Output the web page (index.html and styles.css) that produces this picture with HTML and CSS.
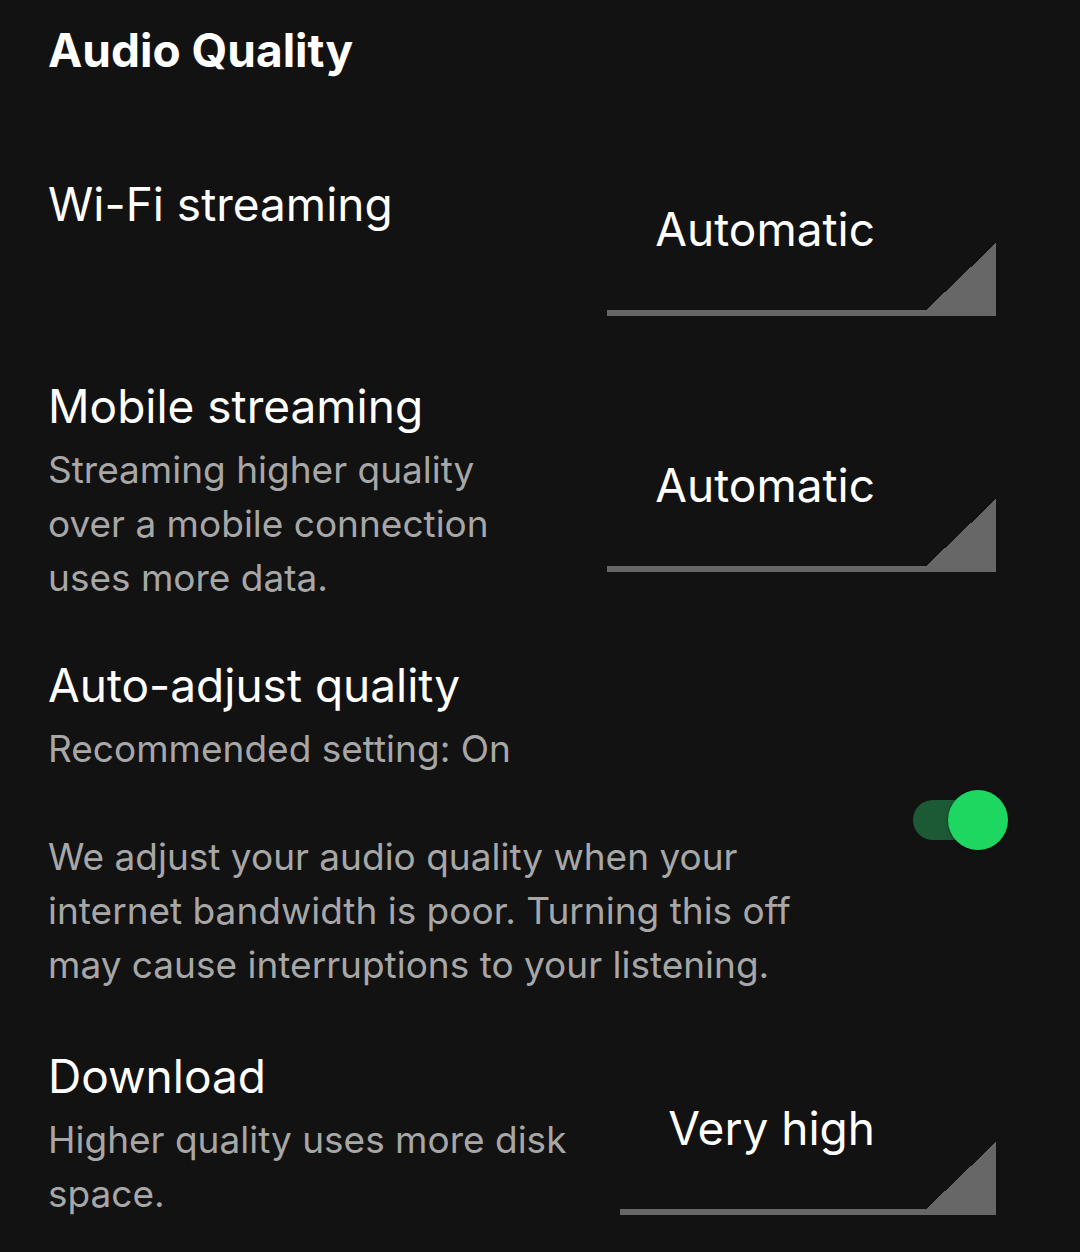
FILE: index.html
```
<!DOCTYPE html>
<html lang="en">
<head>
    <meta charset="UTF-8">
    <meta name="viewport" content="width=device-width, initial-scale=1.0">
    <title>Audio Quality</title>
    <link rel="stylesheet" href="styles.css">
</head>
<body>

<div class="settings">
    <h2 class="section-title">Audio Quality</h2>

    <div class="setting wifi">
        <div class="setting-text">
            <div class="setting-label">Wi-Fi streaming</div>
        </div>
        <div class="spinner">Automatic</div>
    </div>

    <div class="setting mobile">
        <div class="setting-text">
            <div class="setting-label">Mobile streaming</div>
            <p class="setting-desc">Streaming higher quality<br>over a mobile connection<br>uses more data.</p>
        </div>
        <div class="spinner">Automatic</div>
    </div>

    <div class="setting auto">
        <div class="setting-text">
            <div class="setting-label">Auto-adjust quality</div>
            <p class="setting-desc">Recommended setting: On</p>
            <p class="setting-desc extra">We adjust your audio quality when your<br>internet bandwidth is poor. Turning this off<br>may cause interruptions to your listening.</p>
        </div>
        <div class="switch on">
            <span class="switch-thumb"></span>
        </div>
    </div>

    <div class="setting download">
        <div class="setting-text">
            <div class="setting-label">Download</div>
            <p class="setting-desc">Higher quality uses more disk<br>space.</p>
        </div>
        <div class="spinner">Very high</div>
    </div>
</div>

</body>
</html>
```
FILE: styles.css
```
body {
    margin: 0;
    background-color: #121212;
    color: #fff;
    font-family: Inter, "Noto Sans", sans-serif;
}

.settings {
    padding: 22px 84px 0 48px;
}

.section-title {
    margin: 0;
    font-size: 46px;
    font-weight: 700;
    line-height: 56px;
}

.setting {
    display: flex;
    align-items: flex-start;
    gap: 40px;
}

.setting-text {
    flex: 1;
    min-width: 0;
}

.setting-label {
    font-size: 46px;
    line-height: 54px;
}

.setting-desc {
    margin: 10px 0 0;
    font-size: 37px;
    line-height: 54px;
    color: #a7a7a7;
}

.setting-desc.extra {
    margin-top: 54px;
}

/* android style dropdown: underline with a little corner triangle */
.spinner {
    flex-shrink: 0;
    padding: 0 121px 60px 48px;
    font-size: 46px;
    line-height: 54px;
    white-space: nowrap;
    background:
        linear-gradient(to top left, #676767 50%, transparent 50%) right bottom / 76px 73px no-repeat,
        linear-gradient(#676767, #676767) left bottom / 100% 6px no-repeat;
}

.wifi { margin-top: 99px; }
.wifi .spinner { margin-top: 25px; }

.mobile { margin-top: 63px; }
.mobile .spinner { margin-top: 79px; }

.auto { margin-top: 53px; align-items: center; }

.download { margin-top: 57px; }
.download .setting-desc { margin-top: 10px; }
.download .spinner { margin-top: 52px; }

.switch {
    position: relative;
    flex-shrink: 0;
    width: 83px;
    height: 40px;
    margin-bottom: 10px;
    border-radius: 20px;
    background-color: #3e3e3e;
}

.switch.on {
    background-color: #1b5a34;
}

.switch-thumb {
    position: absolute;
    top: -10px;
    left: -10px;
    width: 60px;
    height: 60px;
    border-radius: 50%;
    background-color: #b3b3b3;
    box-shadow: 0 1px 3px rgba(0, 0, 0, 0.4);
}

.switch.on .switch-thumb {
    left: auto;
    right: -12px;
    background-color: #1ed760;
}
```
